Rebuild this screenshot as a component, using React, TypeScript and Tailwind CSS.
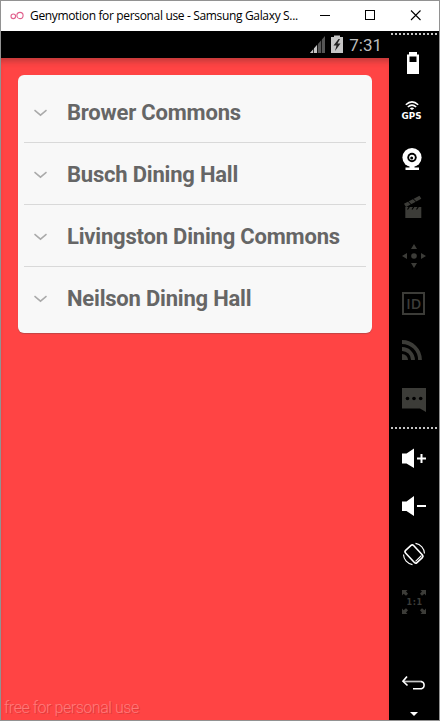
import type { ReactNode } from "react";

const halls = [
  "Brower Commons",
  "Busch Dining Hall",
  "Livingston Dining Commons",
  "Neilson Dining Hall",
];

const DIM = "#3c3c38";

function Tool({ y, h = 48, children }: { y: number; h?: number; children: ReactNode }) {
  return (
    <svg width="50" height={h} viewBox={`389 ${y} 50 ${h}`} className="block shrink-0">
      {children}
    </svg>
  );
}

function Dots() {
  return (
    <svg width="50" height="2" className="block shrink-0" shapeRendering="crispEdges">
      <path d="M2 1H48" stroke="#c4c4c4" strokeWidth="2" strokeDasharray="2 2" />
    </svg>
  );
}

function TitleBar() {
  return (
    <header className="flex h-[30px] shrink-0 items-center bg-white">
      <svg width="14" height="10" viewBox="0 0 14 10" className="mb-px ml-[9px] shrink-0" fill="none" stroke="#e0608c" strokeWidth="1.1">
        <circle cx="3.3" cy="5.3" r="2.3" />
        <circle cx="10" cy="4.5" r="3.1" />
      </svg>
      <span className="ml-[6px] w-[272px] whitespace-nowrap font-['Open_Sans',sans-serif] text-[12px] leading-[30px] tracking-[-0.34px] text-black">
        Genymotion for personal use - Samsung Galaxy S...
      </span>
      <svg width="130" height="30" viewBox="302 1 130 30" fill="none" stroke="#000" className="shrink-0">
        <path d="M320 15.5H330M365.500 10.500H374.500V19.500H365.500Z" shapeRendering="crispEdges" />
        <path d="M411 10.500L420.500 20M420.500 10.500L411 20" strokeWidth="1.1" />
      </svg>
    </header>
  );
}

function StatusBar() {
  return (
    <div className="flex h-[27px] shrink-0 items-center justify-end bg-black pr-[7px]">
      <svg width="36" height="27" viewBox="309 31 36 27">
        <path d="M310 53L325 36V53Z" fill="#565656" />
        <path d="M310 53L317 45V53Z" fill="#c6c6c6" />
        <path d="M313.500 40V53M317.500 36V53M321.500 36V53" stroke="#000" strokeOpacity="0.75" />
        <path d="M331 37H334V35.500H340V37H343V53H331Z" fill="#c6c6c6" />
        <path d="M338.500 39L333.500 45.500H336.500L335 51L340.500 43.500H337.500L340 39Z" fill="#222" />
      </svg>
      <span className="ml-[4px] pt-[2px] font-['Roboto',sans-serif] text-[17px] leading-[25px] text-[#bdbdbd]">7:31</span>
    </div>
  );
}

function HallCard() {
  return (
    <ul className="mx-[17px] mt-[17px] h-[258px] rounded-[6px] bg-[#f8f8f8] px-[6px] pt-[6px] shadow-[0_1px_1px_rgba(120,70,70,0.45)]">
      {halls.map((name, i) => (
        <li
          key={name}
          className={
            "flex h-[62px] items-center pt-[2px] pl-[10px] " +
            (i < halls.length - 1 ? "border-b border-[#d9d9d9]" : "")
          }
        >
          <svg width="14" height="8" viewBox="0 0 14 8" fill="none" stroke="#aaa" strokeWidth="1.5" className="shrink-0">
            <path d="M.5 1.200L6.500 6.200L12.500 1.200" />
          </svg>
          <span className="ml-[19px] whitespace-nowrap font-['Roboto',sans-serif] text-[22px] leading-[30px] font-bold tracking-[-0.2px] text-[#666]">
            {name}
          </span>
        </li>
      ))}
    </ul>
  );
}

function ToolBar() {
  return (
    <aside className="flex w-[50px] shrink-0 flex-col bg-black pt-[2px]">
      <Dots />
      <div className="h-[4px]" />
      <Tool y={39}>
        <path d="M409 52H417V54.500H419V74H407V54.500H409ZM409.500 56.500V62H416.500V56.500Z" fill="#fff" fillRule="evenodd" />
      </Tool>
      <Tool y={87}>
        <g fill="none" stroke="#fff" strokeWidth="1.500">
          <path d="M405.800 104.800Q412 99 418.200 104.800M407.800 107Q412 103.300 416.200 107" />
        </g>
        <path d="M409.800 108.600Q412 106.600 414.200 108.600L412 110Z" fill="#fff" />
        <text x="401.600" y="119" fontFamily="DejaVu Sans, sans-serif" fontSize="9" fontWeight="700" fill="#fff" textLength="20" lengthAdjust="spacingAndGlyphs">GPS</text>
      </Tool>
      <Tool y={135}>
        <circle cx="412" cy="157.500" r="9.600" fill="#fff" />
        <path d="M409.500 165H414.500V167.500H419V170H405.500V167.500H409.500Z" fill="#fff" />
        <circle cx="412" cy="157.500" r="4.700" fill="#000" />
        <circle cx="412" cy="157.500" r="2.800" fill="#fff" />
        <circle cx="411.700" cy="158" r="1.500" fill="#000" />
      </Tool>
      <Tool y={183}>
        <path d="M405.300 207H421.300V218H405.300Z" fill={DIM} />
        <path d="M407.500 209.500L409.500 206.500M412 209.500L414 206.500M416.500 209.500L418.500 206.500" stroke="#000" strokeWidth="1.200" />
        <path d="M404 203.800L419.500 195.800L421.300 198.800L406 207Z" fill={DIM} />
        <path d="M407.800 201L411.500 205M412.800 198.500L416.500 202" stroke="#000" strokeWidth="1" />
      </Tool>
      <Tool y={231}>
        <circle cx="414" cy="256" r="2.800" fill={DIM} />
        <path d="M414 244L417 249H411ZM414 268L417 263H411ZM402 256L407 253V259ZM426 256L421 253V259Z" fill={DIM} />
      </Tool>
      <Tool y={279}>
        <path d="M403 293H424V314H403Z" fill="none" stroke={DIM} strokeWidth="2" />
        <text x="406.300" y="309" fontFamily="Open Sans, sans-serif" fontSize="15" fontWeight="600" fill={DIM} textLength="15" lengthAdjust="spacingAndGlyphs">ID</text>
      </Tool>
      <Tool y={327}>
        <g fill="none" stroke={DIM} strokeWidth="3.800">
          <path d="M402 342A18 18 0 0 1 420 360M402 349A11 11 0 0 1 413 360" />
        </g>
        <path d="M402 354A6 6 0 0 1 408 360H402Z" fill={DIM} />
      </Tool>
      <Tool y={375}>
        <path d="M402 388H426V412L420 408.500H402Z" fill={DIM} />
        <g fill="#000">
          <circle cx="407.500" cy="398.500" r="1.800" />
          <circle cx="414" cy="398.500" r="1.800" />
          <circle cx="420.700" cy="398.500" r="1.800" />
        </g>
      </Tool>
      <div className="h-[4px]" />
      <Dots />
      <div className="h-[5px]" />
      <Tool y={434}>
        <path d="M402 453.500H406.500L414 448.500V468L406.500 463.500H402Z" fill="#fff" />
        <path d="M417 458.500H426M421.500 454V463" stroke="#fff" strokeWidth="2" />
      </Tool>
      <Tool y={482}>
        <path d="M402 501.500H406.500L414 496V516L406.500 511H402Z" fill="#fff" />
        <path d="M417 506H426" stroke="#fff" strokeWidth="2" />
      </Tool>
      <Tool y={530}>
        <g fill="none" stroke="#fff">
          <rect x="408.500" y="545.700" width="11" height="16.600" rx="1.800" strokeWidth="1.600" transform="rotate(-43 414 554)" />
          <path d="M415.500 561.300L421.500 555.500" strokeWidth="1.100" />
          <path d="M415.500 543.400A10.500 10.500 0 0 1 424.500 553.500M403.500 554.500A10.500 10.500 0 0 0 412.500 564.600" strokeWidth="1.100" />
        </g>
      </Tool>
      <Tool y={578}>
        <g fill={DIM}>
          <path id="fit-corner" d="M402 590H407.500L406 591.500L408 593.700L406 595.700L403.600 593.700L402 595.500Z" />
          <use href="#fit-corner" transform="matrix(-1 0 0 1 828 0)" />
          <use href="#fit-corner" transform="matrix(1 0 0 -1 0 1204)" />
          <use href="#fit-corner" transform="matrix(-1 0 0 -1 828 1204)" />
        </g>
        <text x="406.500" y="605" fontFamily="DejaVu Sans, sans-serif" fontSize="8" fontWeight="700" fill={DIM} textLength="15.500">1:1</text>
      </Tool>
      <div className="flex-1" />
      <Tool y={665} h={55}>
        <g fill="none" stroke="#fff">
          <path d="M404 681.500H421.500" stroke="#c8c8c8" strokeWidth="1.700" />
          <path d="M421 681.500A3.700 3.700 0 0 1 421.500 688.700H413" strokeWidth="1.500" />
          <path d="M407 676.500L403 681.300L407.500 685.500" strokeWidth="1.700" />
        </g>
        <path d="M410 712H418L414 716Z" fill="#fff" />
      </Tool>
    </aside>
  );
}

export default function App() {
  return (
    <div className="flex h-[721px] w-[440px] flex-col overflow-hidden border border-[#929292] bg-black">
      <TitleBar />
      <div className="flex min-h-0 flex-1">
        <main className="flex w-[388px] shrink-0 flex-col">
          <StatusBar />
          <section className="flex flex-1 flex-col justify-between bg-[#ff4444] shadow-[inset_0_7px_6px_-4px_rgba(90,40,40,0.4)]">
            <HallCard />
            <span className="pl-[3px] font-['Roboto',sans-serif] text-[16px] leading-[24px] font-light tracking-[-0.45px] text-[#ff7a7a] [text-shadow:1px_1px_0_#e03c3c]">
              free for personal use
            </span>
          </section>
        </main>
        <ToolBar />
      </div>
    </div>
  );
}
